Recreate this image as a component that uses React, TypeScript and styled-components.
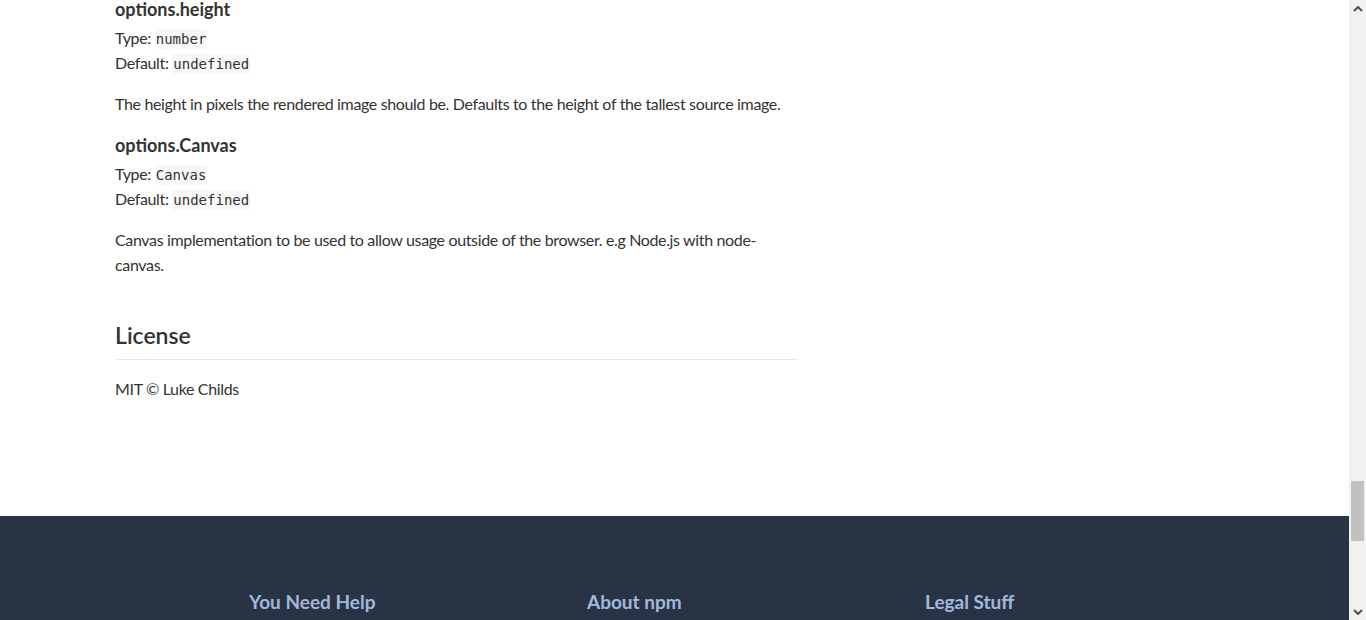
import styled, { createGlobalStyle } from 'styled-components'

const GlobalStyle = createGlobalStyle`
  html, body {
    margin: 0;
    padding: 0;
    height: 620px;
    overflow: hidden;
    background: #fff;
  }
  body {
    font-family: Lato, "Liberation Sans", sans-serif;
    color: #333;
  }
`

const options = [
  {
    name: 'options.height',
    type: 'number',
    def: 'undefined',
    text: 'The height in pixels the rendered image should be. Defaults to the height of the tallest source image.',
  },
  {
    name: 'options.Canvas',
    type: 'Canvas',
    def: 'undefined',
    text: 'Canvas implementation to be used to allow usage outside of the browser. e.g Node.js with node-canvas.',
  },
]

function App() {
  return (
    <Screen>
      <GlobalStyle />
      <Page>
        <Readme>
          {options.map((o, i) => (
            <Option key={o.name} first={i === 0}>
              <OptionName>{o.name}</OptionName>
              <Meta>
                Type: <Code>{o.type}</Code>
              </Meta>
              <Meta>
                Default: <Code>{o.def}</Code>
              </Meta>
              <Para>{o.text}</Para>
            </Option>
          ))}
          <SectionTitle>License</SectionTitle>
          <Para>MIT © Luke Childs</Para>
        </Readme>
        <Footer>
          <FooterCol>You Need Help</FooterCol>
          <FooterCol>About npm</FooterCol>
          <FooterCol>Legal Stuff</FooterCol>
        </Footer>
      </Page>
      <Scrollbar>
        <Arrow>
          <svg width="10" height="6" viewBox="0 0 10 6">
            <path d="M1 5 L5 1 L9 5" fill="none" stroke="#505050" strokeWidth="2" />
          </svg>
        </Arrow>
        <Track>
          <Thumb />
        </Track>
        <Arrow>
          <svg width="10" height="6" viewBox="0 0 10 6">
            <path d="M1 1 L5 5 L9 1" fill="none" stroke="#505050" strokeWidth="2" />
          </svg>
        </Arrow>
      </Scrollbar>
    </Screen>
  )
}

export default App

const Screen = styled.div`
  display: flex;
  height: 620px;
  overflow: hidden;
`

const Page = styled.div`
  flex: 1;
  display: flex;
  flex-direction: column;
`

const Readme = styled.div`
  width: 683px;
  margin-left: 115px;
  height: 516px;
  letter-spacing: -0.35px;
`

const Option = styled.div<{ first?: boolean }>`
  margin-top: ${(p) => (p.first ? '0' : '20px')};
`

const OptionName = styled.h4`
  font-size: 18px;
  font-weight: 700;
  line-height: 18px;
  letter-spacing: 0;
  margin: 0 0 7px;
`

const Meta = styled.div`
  font-size: 16px;
  line-height: 25px;
`

const Code = styled.code`
  font-family: "DejaVu Sans Mono", monospace;
  font-size: 14px;
  line-height: 1;
  letter-spacing: 0;
  background: #f7f7f7;
  padding: 2px 1px;
  border-radius: 2px;
`

const Para = styled.p`
  font-size: 16px;
  line-height: 25px;
  margin: 16px 0 0;
`

const SectionTitle = styled.h2`
  font-size: 23px;
  font-weight: 600;
  line-height: 30px;
  letter-spacing: 0;
  margin: 43px 0 0;
  padding-bottom: 9px;
  border-bottom: 1px solid #eaeaea;
`

const Footer = styled.footer`
  flex: 1;
  background: #283446;
  display: grid;
  grid-template-columns: repeat(3, 338px);
  padding: 74px 0 0 249px;
`

const FooterCol = styled.h3`
  margin: 0;
  font-size: 19px;
  font-weight: 700;
  line-height: 24px;
  color: #a3b8d9;
`

const Scrollbar = styled.div`
  width: 17px;
  background: #f1f1f1;
  display: flex;
  flex-direction: column;
`

const Arrow = styled.div`
  height: 17px;
  display: flex;
  align-items: center;
  justify-content: center;
`

const Track = styled.div`
  flex: 1;
  display: flex;
  flex-direction: column;
`

const Thumb = styled.div`
  margin: 464px 2px 0;
  height: 60px;
  background: #c1c1c1;
`
